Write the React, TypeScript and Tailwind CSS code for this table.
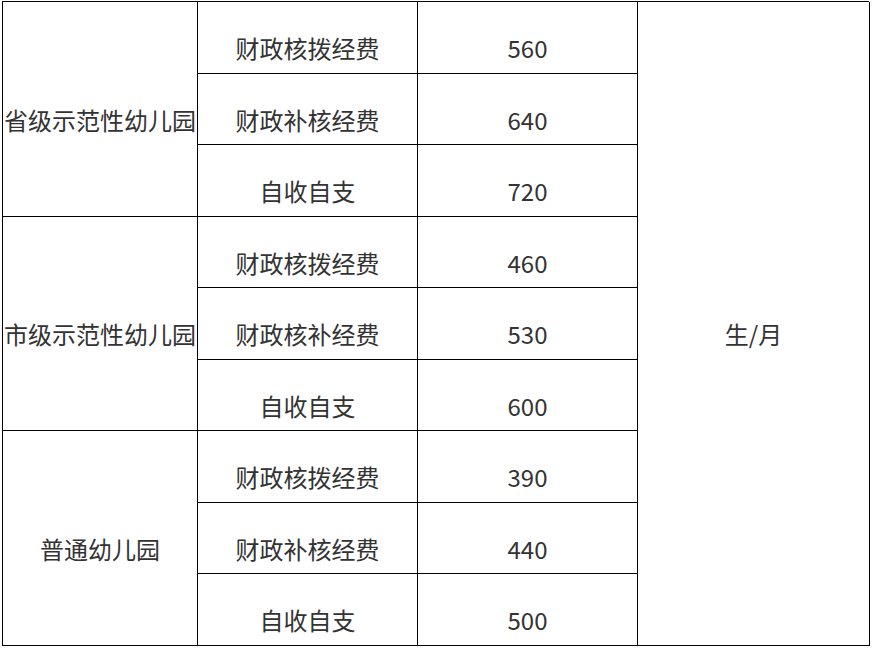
const groups = [
  {
    name: "省级示范性幼儿园",
    items: [
      { type: "财政核拨经费", fee: "560" },
      { type: "财政补核经费", fee: "640" },
      { type: "自收自支", fee: "720" },
    ],
  },
  {
    name: "市级示范性幼儿园",
    items: [
      { type: "财政核拨经费", fee: "460" },
      { type: "财政核补经费", fee: "530" },
      { type: "自收自支", fee: "600" },
    ],
  },
  {
    name: "普通幼儿园",
    items: [
      { type: "财政核拨经费", fee: "390" },
      { type: "财政补核经费", fee: "440" },
      { type: "自收自支", fee: "500" },
    ],
  },
];

const cell =
  "flex items-center justify-center border-r border-b border-black pt-[21px] leading-[24px] whitespace-nowrap";

export default function App() {
  return (
    <div
      className="min-h-screen bg-white pl-[2px] pt-[1px] text-[24px] text-[#333333]"
      style={{ fontFamily: '"Noto Sans CJK SC", "Noto Sans", sans-serif' }}
    >
      <div className="grid w-[867px] grid-cols-[195px_220px_220px_232px] grid-rows-[72px_71px_72px_71px_72px_71px_72px_71px_72px] border-l border-t border-black">
        {groups.map((g, gi) => (
          <div key={g.name} className="contents">
            <div className={`${cell} row-span-3`}>{g.name}</div>
            {g.items.map((it, i) => (
              <div key={i} className="contents">
                <div className={cell}>{it.type}</div>
                <div className={cell}>{it.fee}</div>
                {gi === 0 && i === 0 && (
                  <div className={`${cell} row-span-9`}>生/月</div>
                )}
              </div>
            ))}
          </div>
        ))}
      </div>
    </div>
  );
}
